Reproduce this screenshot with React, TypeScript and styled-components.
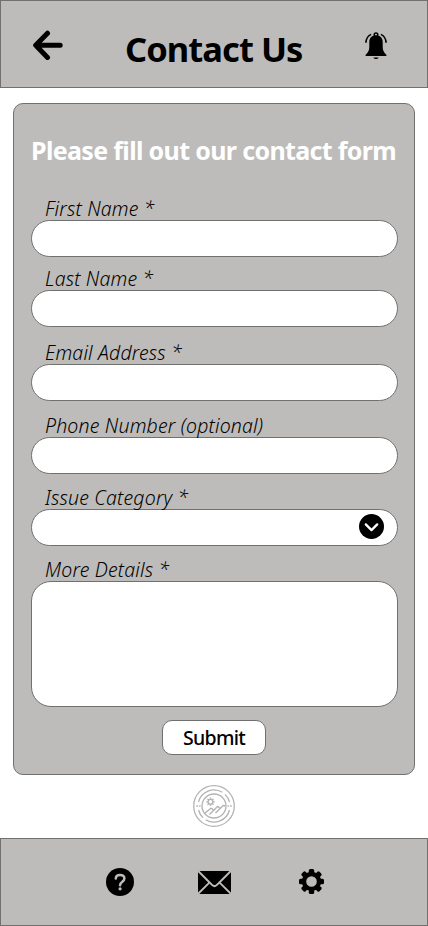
import React from "react";
import styled, { createGlobalStyle } from "styled-components";

const Global = createGlobalStyle`
  *, *::before, *::after { box-sizing: border-box; }
  body { margin: 0; background: #fff; }
  button { font: inherit; padding: 0; cursor: pointer; }
`;

const Page = styled.div`
  width: 428px;
  height: 926px;
  display: flex;
  flex-direction: column;
  align-items: center;
  overflow: hidden;
  background: #fff;
  color: #000;
  font-family: "Noto Sans", "Open Sans", sans-serif;
`;

const Header = styled.header`
  width: 100%;
  height: 88px;
  flex: none;
  display: grid;
  grid-template-columns: 94px 1fr 102px;
  background: #bdbcba;
  border: 1px solid #707070;
`;

const IconButton = styled.button<{ $top?: number; $left?: number }>`
  display: block;
  border: 0;
  background: none;
  line-height: 0;
  justify-self: start;
  align-self: start;
  margin: ${(p) => p.$top ?? 0}px 0 0 ${(p) => p.$left ?? 0}px;
  svg { display: block; }
`;

const Title = styled.h1`
  margin: 23px 0 0 30px;
  font-size: 34.5px;
  line-height: 50px;
  font-weight: 700;
  letter-spacing: -0.95px;
  white-space: nowrap;
`;

const Card = styled.form`
  width: 402px;
  height: 672px;
  flex: none;
  margin: 15px 0 0;
  padding: 0 16px 0 17px;
  background: #bdbcba;
  border: 1px solid #707070;
  border-radius: 10px;
`;

const Heading = styled.h2`
  margin: 29px 0 28px;
  font-size: 25px;
  line-height: 35px;
  font-weight: 700;
  letter-spacing: -0.65px;
  white-space: nowrap;
  color: #fff;
`;

const Field = styled.div<{ $gap?: number }>`
  margin-top: ${(p) => p.$gap ?? 0}px;
`;

const Label = styled.label`
  display: block;
  height: 24px;
  padding-left: 14px;
  font-size: 19.5px;
  line-height: 25px;
  font-style: italic;
  font-weight: 300;
  letter-spacing: 0.17px;
  white-space: nowrap;
`;

const Input = styled.input`
  display: block;
  width: 367px;
  height: 37px;
  padding: 0 18px;
  border: 1px solid #707070;
  border-radius: 19px;
  background: #fff;
  font: inherit;
  outline: none;
`;

const Select = styled.button`
  display: flex;
  align-items: center;
  justify-content: flex-end;
  width: 367px;
  height: 37px;
  border: 1px solid #707070;
  border-radius: 19px;
  background: #fff;
  && { padding: 0 13.5px 2px 0; }
`;

const TextArea = styled.textarea`
  display: block;
  width: 367px;
  height: 126px;
  padding: 14px 18px;
  border: 1px solid #707070;
  border-radius: 20px;
  background: #fff;
  font: inherit;
  resize: none;
  outline: none;
`;

const Submit = styled.button`
  display: block;
  width: 104px;
  height: 35px;
  margin: 13px 0 0 131px;
  border: 1px solid #707070;
  border-radius: 10px;
  background: #fff;
  color: #000;
  && {
    font-size: 19.5px;
    line-height: 33px;
    font-weight: 500;
    letter-spacing: -0.7px;
  }
`;

const LogoRow = styled.div`
  height: 63px;
  flex: none;
  padding-top: 10px;
`;

const Footer = styled.footer`
  width: 100%;
  height: 88px;
  flex: none;
  display: flex;
  background: #bdbcba;
  border: 1px solid #707070;
`;

const BackIcon = () => (
  <svg width="31" height="31" viewBox="0 0 31 31" fill="none" stroke="#000" strokeWidth="5" strokeLinecap="round" strokeLinejoin="round">
    <path d="M28.2 15.2H4M15.5 3.2L3.7 15.3L15.5 27.4" />
  </svg>
);

const BellIcon = () => (
  <svg width="22" height="28" viewBox="0 0 22 28">
    <path d="M11 3.2C6.5 3.2 4.3 6.2 4.3 10V15C4.3 18.5 3 20.7 .9 22.4C.2 23.2.5 24.1 1.4 24.1H20.6C21.5 24.1 21.8 23.2 21.1 22.4C19 20.7 17.7 18.5 17.7 15V10C17.7 6.2 15.5 3.2 11 3.2Z" />
    <circle cx="11" cy="2.8" r="1.8" fill="none" stroke="#000" strokeWidth="1.5" />
    <path d="M8.3 25.5H13.7C13 26.8 12 27.1 11 27.1S9 26.8 8.3 25.5Z" />
    <path d="M6.1 2.4C2.9 4 1 6.8.9 10.8M15.9 2.4C19.1 4 21 6.8 21.1 10.8" fill="none" stroke="#000" strokeWidth="1.6" />
  </svg>
);

const ChevronIcon = () => (
  <svg width="25" height="25" viewBox="0 0 25 25">
    <circle cx="12.5" cy="12.5" r="12.5" />
    <path d="M6.8 10.4L12.5 16.1L18.2 10.4" fill="none" stroke="#fff" strokeWidth="2.3" strokeLinecap="round" strokeLinejoin="round" />
  </svg>
);

const LogoIcon = () => (
  <svg width="42" height="42" viewBox="0 0 42 42" fill="none" stroke="#b3b3b3" strokeWidth="1.3">
    <circle cx="21" cy="21" r="20.3" />
    <circle cx="21" cy="21" r="12" />
    <path d="M5.5 17A16 16 0 0 1 29.4 7.3M12.6 34.7A16 16 0 0 0 36.5 25M32 9.4A16 16 0 0 1 36.5 17M5.5 25A16 16 0 0 0 10 32.6" />
    <path d="M3.3 21H5M6.2 21H7.6M34.4 21H35.8M37 21H38.7" strokeWidth="1.5" />
    <circle cx="17.5" cy="16.8" r="2.4" />
    <path d="M17.5 12.6V14.4M17.5 19.2V21M13.3 16.8H15.1M19.9 16.8H21.7M14.5 13.8L15.8 15.1M19.2 18.5L20.5 19.8M14.5 19.8L15.8 18.5M19.2 15.1L20.5 13.8" />
    <path d="M11.5 28.5L17.3 23.7Q18.5 22.8 19.3 24L20.2 25M16.5 29.5L24 22Q25 21 26 22.3L26.7 23.3M22.5 28L29.4 21.2Q30.8 19.9 32.2 21.2" strokeWidth="1.4" />
  </svg>
);

const HelpIcon = () => (
  <svg width="28" height="28" viewBox="0 0 28 28">
    <circle cx="14" cy="14" r="14" />
    <path d="M9.8 10.6C9.8 8 11.6 6.9 14 6.9C16.5 6.9 18.4 8.3 18.4 10.5C18.4 13.8 14.1 13.5 14.1 17.2" fill="none" stroke="#bdbcba" strokeWidth="2.5" strokeLinecap="round" />
    <circle cx="14.1" cy="20.8" r="1.6" fill="#bdbcba" />
  </svg>
);

const MailIcon = () => (
  <svg width="33" height="23" viewBox="0 0 33 23">
    <path d="M1.6 0H31.4L18 13.4Q16.5 14.8 15 13.4Z" />
    <path d="M0 1.2L10.2 11.4L0 21.6ZM33 1.2L22.8 11.4L33 21.6Z" />
    <path d="M1.3 23L11.5 12.7L14 15.1Q16.5 17.3 19 15.1L21.5 12.7L31.7 23Z" />
  </svg>
);

const GearIcon = () => (
  <svg width="25" height="25" viewBox="0 0 25 25">
    <circle cx="12.5" cy="12.5" r="7.5" fill="none" stroke="#000" strokeWidth="4.4" />
    {[0, 45, 90, 135, 180, 225, 270, 315].map((a) => (
      <path key={a} d="M9.8 4.8V1.5Q9.8 0 11.3 0H13.7Q15.2 0 15.2 1.5V4.8Z" transform={`rotate(${a} 12.5 12.5)`} />
    ))}
  </svg>
);

const fields = [
  { id: "first", label: "First Name *", gap: 0 },
  { id: "last", label: "Last Name *", gap: 9 },
  { id: "email", label: "Email Address *", gap: 13 },
  { id: "phone", label: "Phone Number (optional)", gap: 12 },
];

export default function App() {
  return (
    <Page>
      <Global />
      <Header>
        <IconButton $top={29} $left={31} aria-label="Back"><BackIcon /></IconButton>
        <Title>Contact Us</Title>
        <IconButton $top={31} $left={40} aria-label="Notifications"><BellIcon /></IconButton>
      </Header>
      <Card onSubmit={(e) => e.preventDefault()}>
        <Heading>Please fill out our contact form</Heading>
        {fields.map((f) => (
          <Field key={f.id} $gap={f.gap}>
            <Label htmlFor={f.id}>{f.label}</Label>
            <Input id={f.id} />
          </Field>
        ))}
        <Field $gap={11}>
          <Label htmlFor="category">Issue Category *</Label>
          <Select id="category" type="button"><ChevronIcon /></Select>
        </Field>
        <Field $gap={11}>
          <Label htmlFor="details">More Details *</Label>
          <TextArea id="details" />
        </Field>
        <Submit type="submit">Submit</Submit>
      </Card>
      <LogoRow><LogoIcon /></LogoRow>
      <Footer>
        <IconButton $top={29} $left={105} aria-label="Help"><HelpIcon /></IconButton>
        <IconButton $top={32} $left={64} aria-label="Messages"><MailIcon /></IconButton>
        <IconButton $top={30} $left={68} aria-label="Settings"><GearIcon /></IconButton>
      </Footer>
    </Page>
  );
}
